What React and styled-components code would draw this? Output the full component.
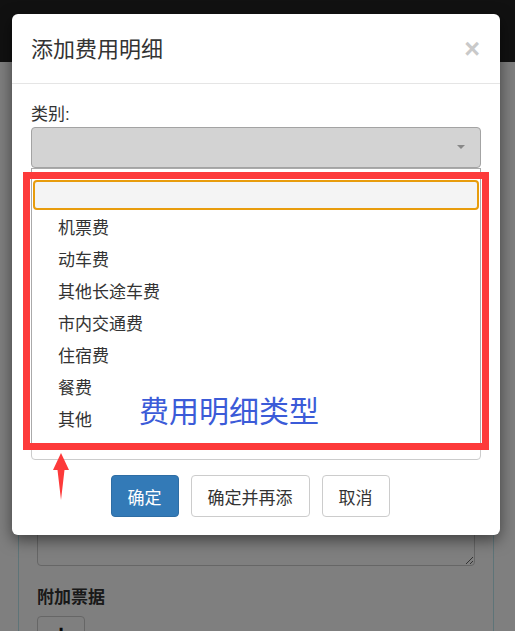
import React from "react";
import styled, { createGlobalStyle } from "styled-components";

const GlobalStyle = createGlobalStyle`
  html, body {
    margin: 0;
    padding: 0;
    background: #fff;
  }
  body {
    font-family: "Liberation Sans", "Noto Sans CJK SC", sans-serif;
    color: #333;
  }
  * {
    box-sizing: border-box;
  }
`;

const Page = styled.div`
  position: relative;
  width: 515px;
  height: 631px;
  overflow: hidden;
  background: #fff;
`;

const Navbar = styled.div`
  height: 62px;
  background: #222;
`;

const Panel = styled.div`
  display: flex;
  flex-direction: column;
  align-items: flex-start;
  margin: 10px 21px 0 18px;
  border: 1px solid #bce8f1;
  border-radius: 4px;
  padding: 17px 18px 0 18px;
`;

const PageInput = styled.div`
  align-self: stretch;
  height: 41px;
  margin: 24px 0 15px;
  border: 1px solid #ccc;
  border-radius: 4px;
`;

const PageTextarea = styled.textarea`
  display: block;
  align-self: stretch;
  height: 130px;
  margin: 26px 0 20px;
  border: 1px solid #ccc;
  border-radius: 4px;
  font-family: inherit;
`;

const PageLabel = styled.label`
  font-size: 17px;
  line-height: 24px;
  font-weight: 700;
  color: #333;
`;

const UploadButton = styled.div`
  width: 48px;
  height: 44px;
  margin-top: 6px;
  border: 1px solid #ccc;
  border-radius: 4px;
  display: flex;
  justify-content: center;
  font-size: 26px;
  font-weight: 700;
  line-height: 34px;
  color: #111;
`;

const Backdrop = styled.div`
  position: absolute;
  inset: 0;
  background: rgba(0, 0, 0, 0.5);
`;

const Modal = styled.div`
  position: absolute;
  left: 12px;
  top: 14px;
  width: 488px;
  background: #fff;
  border-radius: 6px;
  box-shadow: 0 5px 15px rgba(0, 0, 0, 0.5);
`;

const Header = styled.div`
  display: flex;
  align-items: center;
  justify-content: space-between;
  height: 70px;
  padding: 2px 19px 0;
  border-bottom: 1px solid #e5e5e5;
`;

const Title = styled.h4`
  margin: 0;
  font-size: 22px;
  font-weight: 400;
  color: #333;
  line-height: 30px;
`;

const Close = styled.span`
  font-family: "Liberation Sans", sans-serif;
  font-size: 27px;
  font-weight: 700;
  color: #c9c9c9;
  line-height: 1;
  margin-right: 1px;
`;

const Body = styled.div`
  display: flex;
  flex-direction: column;
  padding: 19px 19px 0;
`;

const Group = styled.div`
  position: relative;
  display: flex;
  flex-direction: column;
  margin-bottom: 15px;
`;

const Label = styled.label`
  font-size: 17px;
  line-height: 24px;
  color: #333;
`;

const Select = styled.div`
  position: relative;
  height: 41px;
  background: #d3d3d3;
  border: 1px solid #a3a3a3;
  border-radius: 4px;
  &::after {
    content: "";
    position: absolute;
    right: 15px;
    top: 17px;
    border-left: 4px solid transparent;
    border-right: 4px solid transparent;
    border-top: 4px solid #888;
  }
`;

const Input = styled.div`
  height: ${(p) => p.$h || 41}px;
  margin: 25px 0 ${(p) => (p.$last ? 0 : 15)}px;
  border: 1px solid #ccc;
  border-radius: 4px;
`;

const Dropdown = styled.div`
  position: absolute;
  left: 0;
  right: 0;
  top: 100%;
  z-index: 2;
  background: #fff;
  border: 1px solid #aaa;
  padding: 11px 1px 8px;
`;

const Search = styled.div`
  height: 30px;
  margin-bottom: 3px;
  background: #f4f4f4;
  border: 2px solid #e89c0c;
  border-radius: 4px;
`;

const Option = styled.div`
  height: 32px;
  line-height: 32px;
  padding-left: 25px;
  font-size: 17px;
  color: #333;
`;

const Footer = styled.div`
  display: flex;
  justify-content: center;
  gap: 12px;
  padding: 15px 31px 18px 19px;
`;

const Button = styled.button`
  height: 42px;
  padding: 0 16px;
  font-family: inherit;
  font-size: 17px;
  border-radius: 4px;
  border: 1px solid ${(p) => (p.$primary ? "#2e6da4" : "#ccc")};
  background: ${(p) => (p.$primary ? "#337ab7" : "#fff")};
  color: ${(p) => (p.$primary ? "#fff" : "#333")};
`;

const RedBox = styled.div`
  position: absolute;
  left: 11px;
  top: 158px;
  width: 466px;
  height: 278px;
  border: 7px solid #fd3a3a;
  z-index: 3;
`;

const Note = styled.div`
  position: absolute;
  left: 127px;
  top: 383px;
  font-size: 30px;
  line-height: 1;
  color: #3b5bd8;
  z-index: 3;
`;

const Arrow = styled.svg`
  position: absolute;
  left: 41px;
  top: 439px;
  z-index: 3;
`;

const categories = [
  "机票费",
  "动车费",
  "其他长途车费",
  "市内交通费",
  "住宿费",
  "餐费",
  "其他",
];

export default function App() {
  return (
    <Page>
      <GlobalStyle />
      <Navbar />
      <Panel>
        <PageInput />
        <PageInput />
        <PageInput />
        <PageInput />
        <PageTextarea readOnly />
        <PageLabel>附加票据</PageLabel>
        <UploadButton>+</UploadButton>
      </Panel>
      <Backdrop />
      <Modal>
        <Header>
          <Title>添加费用明细</Title>
          <Close>×</Close>
        </Header>
        <Body>
          <Group>
            <Label>类别:</Label>
            <Select />
            <Dropdown>
              <Search />
              {categories.map((c) => (
                <Option key={c}>{c}</Option>
              ))}
            </Dropdown>
          </Group>
          <Input />
          <Input />
          <Input $h={90} $last />
        </Body>
        <Footer>
          <Button $primary>确定</Button>
          <Button>确定并再添</Button>
          <Button>取消</Button>
        </Footer>
        <RedBox />
        <Note>费用明细类型</Note>
        <Arrow width="16" height="47" viewBox="0 0 16 47">
          <polygon points="8,0 16,17 11.5,17 8,47 4.5,17 0,17" fill="#fd3a3a" />
        </Arrow>
      </Modal>
    </Page>
  );
}
